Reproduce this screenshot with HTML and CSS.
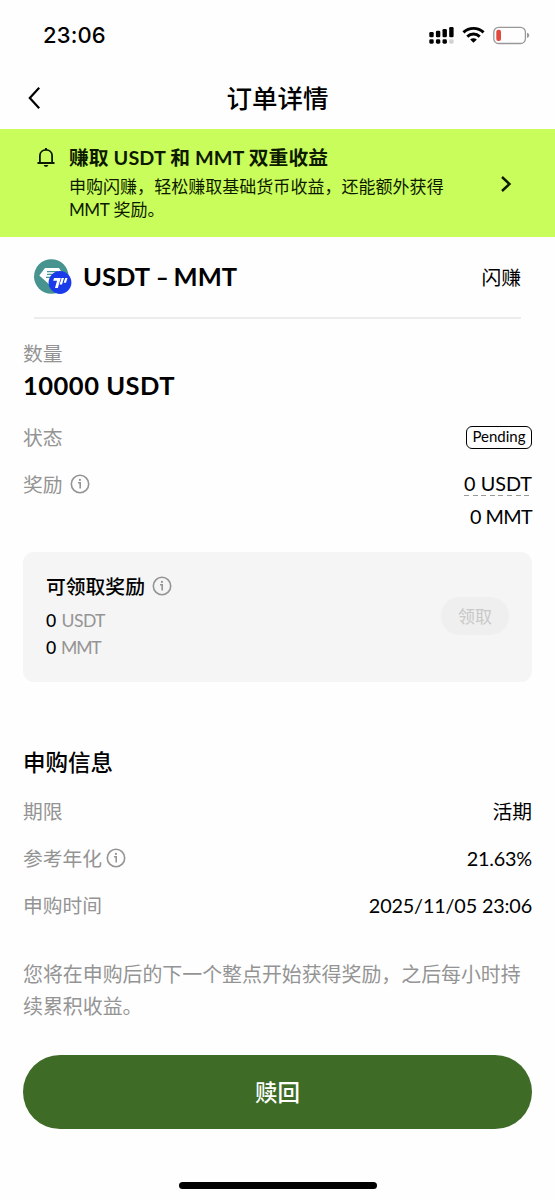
FILE: index.html
```html
<!DOCTYPE html>
<html lang="zh-CN">
<head>
<meta charset="utf-8">
<title>订单详情</title>
<link rel="stylesheet" href="styles.css">
</head>
<body>
<svg class="defs" width="0" height="0">
  <symbol id="info" viewBox="0 0 20 20">
    <circle cx="10" cy="10" r="8.700" fill="none" stroke="#949494" stroke-width="1.600"/>
    <path d="M8 8.700H10.200V14.600" fill="none" stroke="#949494" stroke-width="1.600"/>
    <circle cx="9.900" cy="5.900" r="1.100" fill="#949494"/>
  </symbol>
</svg>
<div class="screen">
  <header class="status">
    <span class="clock">23:06</span>
    <div class="status-icons">
      <svg width="25" height="19" viewBox="0 0 25 19">
        <g fill="#000">
          <rect x="0.300" y="6" width="4.400" height="5.200" rx="1.300"/><rect x="6.900" y="4.800" width="4.400" height="6.400" rx="1.300"/>
          <rect x="13.500" y="3" width="4.400" height="8.200" rx="1.300"/><rect x="20.200" y="1" width="4.400" height="10.200" rx="1.300"/>
          <rect x="0.300" y="13.300" width="4.400" height="4.400" rx="1.400"/><rect x="6.900" y="13.300" width="4.400" height="4.400" rx="1.400"/>
          <rect x="13.500" y="13.300" width="4.400" height="4.400" rx="1.400"/><rect x="20.200" y="13.300" width="4.400" height="4.400" rx="1.400" fill="#d2d2d2"/>
        </g>
      </svg>
      <svg width="23" height="18" viewBox="0 0 24 18">
        <g fill="none" stroke="#000" stroke-width="3.100">
          <path d="M1.500 6.300C7.400.700 16.600.700 22.500 6.300"/>
          <path d="M5.500 10.600C9.200 7.200 14.800 7.200 18.500 10.600"/>
        </g>
        <path d="M8.500 13.600C10.500 12 13.500 12 15.500 13.600L12 17.200Z" fill="#000"/>
      </svg>
      <svg width="37" height="19" viewBox="0 0 37 19">
        <rect x="0.800" y="1.300" width="31.600" height="16.200" rx="4.800" fill="none" stroke="#999" stroke-width="1.300"/>
        <rect x="3.300" y="3.700" width="4.700" height="11.400" rx="2" fill="#e2493f"/>
        <path d="M34 6.800C37 7.700 37 11 34 12Z" fill="#999"/>
      </svg>
    </div>
  </header>

  <nav class="nav">
    <svg class="back" width="14" height="24" viewBox="0 0 14 24"><path d="M12.200 1.800L2.800 12L12.200 22.200" fill="none" stroke="#000" stroke-width="2.200"/></svg>
    <h1 class="nav-title">订单详情</h1>
  </nav>

  <section class="banner">
    <svg class="bell" width="18" height="21" viewBox="0 0 18 21">
      <path d="M0.500 16H17.500M2.900 16V8.800C2.900 1 15.100 1 15.100 8.800V16" fill="none" stroke="#0d1a00" stroke-width="1.800"/>
      <path d="M9 1V3" stroke="#0d1a00" stroke-width="2"/>
      <path d="M6.600 18H11.400L10.200 19.700H7.800Z" fill="#0d1a00"/>
    </svg>
    <div class="banner-body">
      <h2 class="banner-title">赚取 USDT 和 MMT 双重收益</h2>
      <p class="banner-text">申购闪赚，轻松赚取基础货币收益，还能额外获得<br><span class="tight">MMT</span> 奖励。</p>
    </div>
    <svg class="chevron" width="12" height="18" viewBox="0 0 12 18"><path d="M2 2L9.500 9L2 16" fill="none" stroke="#0d1a00" stroke-width="2.400"/></svg>
  </section>

  <section class="product">
    <svg class="coins" width="38" height="36" viewBox="0 0 38 36">
      <circle cx="17.300" cy="17.500" r="17.300" fill="#46938f"/>
      <path d="M11 9H25L29 15.500L17 27L5.300 16.500Z" fill="#fff"/>
      <path d="M13 12.600H24M12 18.300H16.500M13 15.300H21" fill="none" stroke="#46938f" stroke-width="1.300"/>
      <circle cx="26" cy="23.500" r="11.400" fill="#1a3be9"/>
      <path d="M20 19H26.800L23.800 29H21L23 21.700H19.200ZM27.600 19H30L28 25.600H25.600ZM31.200 19H33.500L32 23.800H29.700Z" fill="#fff"/>
    </svg>
    <h2 class="product-name">USDT <span class="dash">–</span> MMT</h2>
    <span class="product-type">闪赚</span>
  </section>

  <main class="details">
    <div class="label amount-label">数量</div>
    <div class="amount">10000 USDT</div>
    <div class="row row-state"><span class="label">状态</span><span class="badge">Pending</span></div>
    <div class="row row-reward"><span class="label">奖励<svg class="info info-gap" width="20" height="20"><use href="#info"/></svg></span><span class="reward dashed">0 USDT</span></div>
    <div class="row row-reward2"><span class="reward reward-mmt">0 MMT</span></div>

    <section class="claim">
      <div class="claim-body">
        <h3 class="claim-title">可领取奖励<svg class="info info-gap" width="20" height="20"><use href="#info"/></svg></h3>
        <p class="claim-line"><b>0</b> USDT</p>
        <p class="claim-line claim-mmt"><b>0</b> MMT</p>
      </div>
      <button class="claim-btn" disabled>领取</button>
    </section>

    <h3 class="section-title">申购信息</h3>
    <div class="row row-info"><span class="label">期限</span><span class="value">活期</span></div>
    <div class="row row-info"><span class="label">参考年化<svg class="info info-tight" width="20" height="20"><use href="#info"/></svg></span><span class="value rate">21.63%</span></div>
    <div class="row row-info"><span class="label">申购时间</span><span class="value date">2025/11/05 23:06</span></div>
    <p class="note">您将在申购后的下一个整点开始获得奖励，之后每小时持<br>续累积收益。</p>
    <button class="redeem">赎回</button>
  </main>
  <div class="home"></div>
</div>
</body>
</html>
```
FILE: styles.css
```css
* { box-sizing: border-box; margin: 0; padding: 0; }
body {
  width: 555px;
  background: #fefefe;
  color: #000;
  font-family: Lato, "Noto Sans CJK SC", sans-serif;
  font-size: 19.800px;
}
svg { display: block; flex: none; }
.defs { position: absolute; }
button { border: 0; font-family: inherit; }
.screen { height: 1200px; display: flex; flex-direction: column; overflow: hidden; }

.status { height: 70px; padding: 0 25px 0 43px; display: flex; align-items: center; justify-content: space-between; }
.clock { font: 500 22px/30px Inter, sans-serif; letter-spacing: 0.150px; }
.status-icons { display: flex; align-items: center; gap: 8px; }

.nav { height: 59px; padding: 0 27px 3px; display: grid; grid-template-columns: 14px 1fr 14px; align-items: center; }
.nav-title { font-size: 25.500px; line-height: 36px; font-weight: 500; text-align: center; }

.banner { height: 108px; background: #c9fd5b; color: #0d1a00; display: flex; align-items: flex-start; padding: 14px 43px 0 37px; }
.bell { margin-top: 4px; }
.banner-body { flex: 1; margin-left: 14px; }
.banner-title { font-size: 19.800px; line-height: 28px; font-weight: 700; letter-spacing: 0.080px; white-space: nowrap; }
.banner-text { font-size: 17.050px; line-height: 23px; margin-top: 4px; white-space: nowrap; }
.tight { letter-spacing: -0.500px; }
.chevron { margin-top: 32px; }

.product { height: 82px; margin: 0 34px; border-bottom: 2px solid #ececec; display: flex; align-items: center; }
.product-name { font-size: 25.500px; line-height: 34px; font-weight: 700; margin-left: 11px; padding-bottom: 2px; flex: 1; }
.dash { display: inline-block; width: 12px; transform: scaleX(0.850); }
.product-type { line-height: 28px; }

.details { padding: 0 23px; flex: 1; display: flex; flex-direction: column; }
.label { color: #949494; display: flex; align-items: center; line-height: 28px; }
.amount-label { margin-top: 20px; }
.amount { font-size: 25.500px; line-height: 36px; font-weight: 700; letter-spacing: 0.500px; }
.row { display: flex; justify-content: space-between; align-items: center; }
.row-state { height: 47px; margin-top: 10px; }
.row-reward { height: 47px; }
.row-reward2 { height: 19px; justify-content: flex-end; }
.badge { width: 66px; height: 23px; margin-top: 2px; border: 1.500px solid #000; border-radius: 6px; font-size: 15px; line-height: 19px; text-align: center; }
.reward { line-height: 26px; margin-top: -2px; }
.reward-mmt { letter-spacing: -0.600px; }
.dashed {
  background: repeating-linear-gradient(90deg, #999 0 5px, transparent 5px 8.600px) left bottom / 100% 1px no-repeat;
}
.info-gap { margin-left: 7px; }
.info-tight { margin-left: 4px; }

.claim { height: 130px; margin-top: 26px; padding: 20px 23px 0; background: #f5f5f5; border-radius: 11px; display: flex; justify-content: space-between; align-items: flex-start; }
.claim-title { display: flex; align-items: center; font-size: 19.800px; line-height: 28px; font-weight: 500; margin-bottom: 7px; }
.claim-line { font-size: 17.600px; line-height: 27px; color: #949494; letter-spacing: -0.600px; }
.claim-mmt { letter-spacing: -1.200px; }
.claim-line b { color: #000; font-weight: 500; letter-spacing: 1.500px; }
.claim-btn { width: 68px; height: 38px; margin-top: 25px; border-radius: 19px; background: #efefef; color: #c8c8c8; font-size: 17px; padding-bottom: 2px; }

.section-title { font-size: 22.500px; line-height: 32px; font-weight: 500; margin-top: 65px; margin-bottom: 8px; }
.row-info { height: 47px; }
.value { line-height: 28px; }
.rate { letter-spacing: -0.200px; }
.date { letter-spacing: -0.150px; }
.note { color: #949494; font-size: 19.920px; line-height: 32px; margin-top: 30px; white-space: nowrap; }
.redeem { height: 74px; flex: none; margin-top: 33px; border-radius: 37px; background: #3e6c26; color: #fff; font-size: 22.500px; font-weight: 500; padding-bottom: 2px; }
.home { width: 198px; height: 7px; border-radius: 4px; background: #000; margin: 0 auto 11px; }
```
